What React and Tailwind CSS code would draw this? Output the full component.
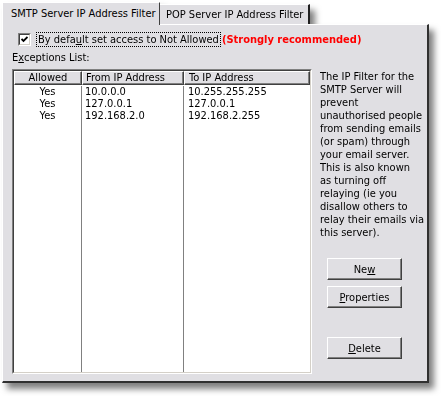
import React from 'react';

const rows = [
    { allowed: 'Yes', from: '10.0.0.0', to: '10.255.255.255' },
    { allowed: 'Yes', from: '127.0.0.1', to: '127.0.0.1' },
    { allowed: 'Yes', from: '192.168.2.0', to: '192.168.2.255' },
];

const helpLines = [
    'The IP Filter for the',
    'SMTP Server will',
    'prevent',
    'unauthorised people',
    'from sending emails',
    '(or spam) through',
    'your email server.',
    'This is also known',
    'as turning off',
    'relaying (ie you',
    'disallow others to',
    'relay their emails via',
    'this server).',
];

function WinButton({ children, className = '' }) {
    return (
        <button className={`w-[75px] h-[22px] bg-[#e0dfe3] border border-white border-r-[#404040] border-b-[#404040] shadow-[inset_-1px_-1px_0_#808080] text-black leading-none ${className}`}>
            {children}
        </button>
    );
}

function HeaderCell({ children, className = '' }) {
    return (
        <div className={`h-[14px] leading-[12px] bg-[#e0dfe3] border-l border-t border-white border-r border-b border-r-[#404040] border-b-[#404040] shadow-[inset_-1px_-1px_0_#808080] ${className}`}>
            {children}
        </div>
    );
}

export default function App() {
    return (
        <div className="w-[441px] h-[396px] bg-white pl-[2px] pt-[2px] text-[11px] text-black font-['DejaVu_Sans_Condensed','Liberation_Sans',sans-serif]">
            <div className="w-[427px] drop-shadow-[5px_6px_3px_rgba(0,0,0,0.5)]">
                {/* tabs */}
                <div className="flex items-end">
                    <div className="relative z-10 -mb-px h-[23px] w-[158px] bg-[#e0dfe3] border-l border-t border-white border-r border-r-[#404040] pl-[8px] pt-[4px] leading-[13px]">
                        SMTP Server IP Address Filter
                    </div>
                    <div className="h-[20px] w-[150px] bg-[#e0dfe3] border-t border-white border-r-2 border-r-[#202020] pl-[6px] pt-[3px] leading-[13px]">
                        POP Server IP Address Filter
                    </div>
                </div>

                {/* page */}
                <div className="h-[359px] w-[427px] bg-[#e0dfe3] border border-white border-r-2 border-b-2 border-r-[#303030] border-b-[#303030]">
                    <div className="flex items-center pl-[15px] pt-[7px] h-[21px]">
                        <div className="w-[13px] h-[13px] border border-[#808080] border-r-white border-b-white">
                            <div className="w-[11px] h-[11px] bg-white border border-[#404040] border-r-[#d4d0c8] border-b-[#d4d0c8] flex items-center justify-center">
                                <svg width="7" height="7" viewBox="0 0 7 7">
                                    <polyline points="0.5,3 2.5,5 6.5,1" fill="none" stroke="black" strokeWidth="1.8" />
                                </svg>
                            </div>
                        </div>
                        <span className="ml-[5px] border border-dotted border-black px-[1px] leading-[13px]">
                            By defa<span className="underline">u</span>lt set access to Not Allowed
                        </span>
                        <span className="ml-[1px] font-bold text-[#ff0000] leading-[13px]">(Strongly recommended)</span>
                    </div>

                    <div className="ml-[9px] mt-[5px] h-[13px] leading-[13px]">
                        E<span className="underline">x</span>ceptions List:
                    </div>

                    <div className="flex mt-[5px]">
                        {/* list view */}
                        <div className="ml-[9px] w-[300px] h-[305px] border border-[#808080] border-r-white border-b-white">
                            <div className="w-full h-full bg-white border border-[#404040] border-r-[#d4d0c8] border-b-[#d4d0c8] flex flex-col">
                                <div className="flex">
                                    <HeaderCell className="w-[68px] text-center">Allowed</HeaderCell>
                                    <HeaderCell className="w-[102px] pl-[3px]">From IP Address</HeaderCell>
                                    <HeaderCell className="flex-1 pl-[4px]">To IP Address</HeaderCell>
                                </div>
                                <div className="flex flex-1 pt-px">
                                    <div className="w-[68px] border-r border-[#808080] text-center">
                                        {rows.map((r, i) => <div key={i} className="h-[12px] leading-[12px]">{r.allowed}</div>)}
                                    </div>
                                    <div className="w-[102px] border-r border-[#808080] pl-[3px]">
                                        {rows.map((r, i) => <div key={i} className="h-[12px] leading-[12px]">{r.from}</div>)}
                                    </div>
                                    <div className="flex-1 pl-[4px]">
                                        {rows.map((r, i) => <div key={i} className="h-[12px] leading-[12px]">{r.to}</div>)}
                                    </div>
                                </div>
                            </div>
                        </div>

                        {/* help + buttons */}
                        <div className="ml-[8px] w-[106px] flex flex-col">
                            <div className="pt-px leading-[13px] whitespace-nowrap">
                                {helpLines.map((l, i) => <div key={i}>{l}</div>)}
                            </div>
                            <WinButton className="ml-[7px] mt-[19px]">Ne<span className="underline">w</span></WinButton>
                            <WinButton className="ml-[7px] mt-[6px]"><span className="underline">P</span>roperties</WinButton>
                            <WinButton className="ml-[7px] mt-[29px]"><span className="underline">D</span>elete</WinButton>
                        </div>
                    </div>
                </div>
            </div>
        </div>
    );
}
